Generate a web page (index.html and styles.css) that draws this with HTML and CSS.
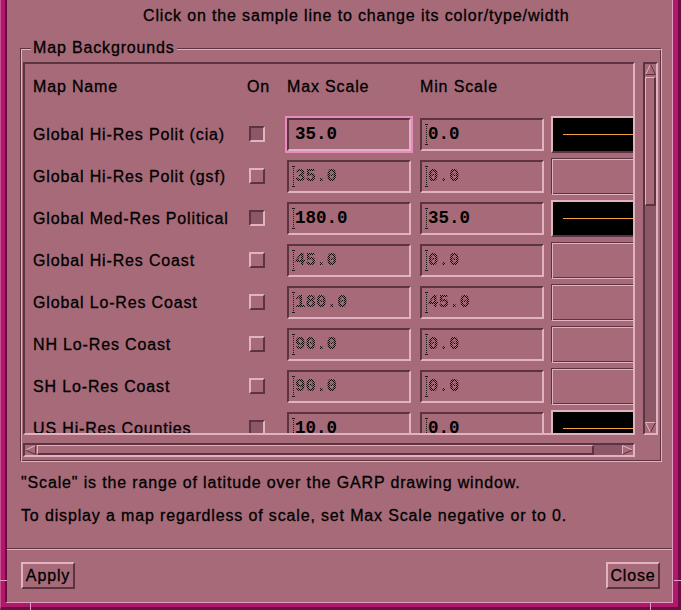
FILE: index.html
```html
<!DOCTYPE html>
<html>
<head>
<meta charset="utf-8">
<link rel="stylesheet" href="styles.css">
</head>
<body>
<div class="wm">
  <div class="wm-in">
    <div class="dialog">
      <div class="title">Click on the sample line to change its color/type/width</div>
      <div class="frame">
        <span class="frame-label">Map Backgrounds</span>
        <div class="sw">
          <div class="clip">
            <div class="table">
              <div class="hdr">
                <span class="c-name">Map Name</span>
                <span class="c-on">On</span>
                <span class="c-fld">Max Scale</span>
                <span class="c-fld">Min Scale</span>
              </div>

              <div class="row">
                <span class="name">Global Hi-Res Polit (cia)</span>
                <span class="on"><span class="tog set"></span></span>
                <span class="fld focus"><span class="val">35.0</span></span>
                <span class="fld"><span class="beam"></span><span class="val">0.0</span></span>
                <span class="line on-line"><span class="stroke"></span></span>
              </div>

              <div class="row">
                <span class="name">Global Hi-Res Polit (gsf)</span>
                <span class="on"><span class="tog"></span></span>
                <span class="fld"><span class="beam"></span><span class="val dim">35.0</span></span>
                <span class="fld"><span class="beam"></span><span class="val dim">0.0</span></span>
                <span class="line off-line"></span>
              </div>

              <div class="row">
                <span class="name">Global Med-Res Political</span>
                <span class="on"><span class="tog set"></span></span>
                <span class="fld"><span class="beam"></span><span class="val">180.0</span></span>
                <span class="fld"><span class="beam"></span><span class="val">35.0</span></span>
                <span class="line on-line"><span class="stroke"></span></span>
              </div>

              <div class="row">
                <span class="name">Global Hi-Res Coast</span>
                <span class="on"><span class="tog"></span></span>
                <span class="fld"><span class="beam"></span><span class="val dim">45.0</span></span>
                <span class="fld"><span class="beam"></span><span class="val dim">0.0</span></span>
                <span class="line off-line"></span>
              </div>

              <div class="row">
                <span class="name">Global Lo-Res Coast</span>
                <span class="on"><span class="tog"></span></span>
                <span class="fld"><span class="beam"></span><span class="val dim">180.0</span></span>
                <span class="fld"><span class="beam"></span><span class="val dim">45.0</span></span>
                <span class="line off-line"></span>
              </div>

              <div class="row">
                <span class="name">NH Lo-Res Coast</span>
                <span class="on"><span class="tog"></span></span>
                <span class="fld"><span class="beam"></span><span class="val dim">90.0</span></span>
                <span class="fld"><span class="beam"></span><span class="val dim">0.0</span></span>
                <span class="line off-line"></span>
              </div>

              <div class="row">
                <span class="name">SH Lo-Res Coast</span>
                <span class="on"><span class="tog"></span></span>
                <span class="fld"><span class="beam"></span><span class="val dim">90.0</span></span>
                <span class="fld"><span class="beam"></span><span class="val dim">0.0</span></span>
                <span class="line off-line"></span>
              </div>

              <div class="row">
                <span class="name">US Hi-Res Counties</span>
                <span class="on"><span class="tog set"></span></span>
                <span class="fld"><span class="beam"></span><span class="val">10.0</span></span>
                <span class="fld"><span class="beam"></span><span class="val">0.0</span></span>
                <span class="line on-line"><span class="stroke"></span></span>
              </div>
            </div>
          </div>
          <div class="gap"></div>
          <div class="vscroll">
            <svg class="arr" width="11" height="11" viewBox="0 0 11 11">
              <polygon points="5.5,1 1,10 10,10" fill="#a66a79"/>
              <path d="M0.5 10.5 L5.5 0.5" stroke="#e0b2c2" fill="none"/>
              <path d="M5.5 0.5 L10.5 10.5 L0.5 10.5" stroke="#5b3341" fill="none"/>
            </svg>
            <div class="vthumb"></div>
            <div class="vrest"></div>
            <svg class="arr" width="11" height="11" viewBox="0 0 11 11">
              <polygon points="1,1 10,1 5.5,10" fill="#a66a79"/>
              <path d="M5.5 10.5 L0.5 0.5 L10.5 0.5" stroke="#e0b2c2" fill="none"/>
              <path d="M10.5 0.5 L5.5 10.5" stroke="#5b3341" fill="none"/>
            </svg>
          </div>
          <div class="hscroll">
            <svg class="arr" width="11" height="10" viewBox="0 0 11 10">
              <polygon points="1,5 10,1 10,9" fill="#a66a79"/>
              <path d="M0.5 5 L10.5 0.5" stroke="#e0b2c2" fill="none"/>
              <path d="M10.5 0.5 L10.5 9.5 L0.5 5" stroke="#5b3341" fill="none"/>
            </svg>
            <div class="hthumb"></div>
            <div class="hrest"></div>
            <svg class="arr" width="11" height="10" viewBox="0 0 11 10">
              <polygon points="1,1 10,5 1,9" fill="#a66a79"/>
              <path d="M0.5 9.5 L0.5 0.5 L10.5 5" stroke="#e0b2c2" fill="none"/>
              <path d="M10.5 5 L0.5 9.5" stroke="#5b3341" fill="none"/>
            </svg>
          </div>
        </div>
      </div>
      <p class="note first">"Scale" is the range of latitude over the GARP drawing window.</p>
      <p class="note">To display a map regardless of scale, set Max Scale negative or to 0.</p>
      <div class="sep"></div>
      <div class="buttons">
        <button class="btn">Apply</button>
        <button class="btn">Close</button>
      </div>
    </div>
  </div>
  <span class="tick tick-bl"></span>
  <span class="tick tick-br"></span>
  <span class="tick-h tick-lh"></span>
  <span class="tick-h tick-rh"></span>
</div>
</body>
</html>
```
FILE: styles.css
```css
* { box-sizing: border-box; }
html, body { margin: 0; padding: 0; }
body {
  width: 681px;
  height: 610px;
  overflow: hidden;
  background: #a66a79;
  font-family: "Liberation Sans", Arial, sans-serif;
  font-size: 16px;
  letter-spacing: 0.85px;
  -webkit-text-stroke: 0.3px #000;
  color: #000;
}

.wm {
  position: relative;
  width: 681px;
  height: 610px;
  display: flex;
  background: #b0186e;
  border-left: 1px solid #c8508c;
  border-right: 3px solid #6c0c40;
  border-bottom: 3px solid #6c0c40;
  padding: 0 5px 4px 4px;
}
.wm-in {
  flex: 1;
  display: flex;
  border-left: 2px solid #6c0c40;
  border-right: 1px solid #e0a0c0;
  border-bottom: 1px solid #e0a0c0;
}
.dialog {
  flex: 1;
  background: #a66a79;
  display: flex;
  flex-direction: column;
}

.title {
  margin: 6px 0 0 136px;
  line-height: 20px;
  white-space: nowrap;
}

.frame {
  position: relative;
  margin: 22px 0 0 13px;
  width: 642px;
  height: 414px;
  border: 1px solid;
  border-color: #5b3341 #e0b2c2 #e0b2c2 #5b3341;
  box-shadow: inset 1px 1px 0 #e0b2c2, inset -1px -1px 0 #5b3341;
  padding: 13px 3px 4px 2px;
}
.frame-label {
  position: absolute;
  left: 10px;
  top: -11px;
  padding: 0 2px;
  line-height: 20px;
  background: #a66a79;
  white-space: nowrap;
}

.sw {
  display: grid;
  grid-template-columns: 612px 8px 15px;
  grid-template-rows: 373px 8px 14px;
}
.clip {
  grid-column: 1;
  grid-row: 1;
  overflow: hidden;
  border: 2px solid;
  border-color: #5b3341 #e0b2c2 #e0b2c2 #5b3341;
}
.gap { grid-column: 2; grid-row: 1; }
.vscroll {
  grid-column: 3;
  grid-row: 1;
  display: flex;
  flex-direction: column;
  border: 2px solid;
  border-color: #5b3341 #e0b2c2 #e0b2c2 #5b3341;
  background: #a66a79;
}
.hscroll {
  grid-column: 1;
  grid-row: 3;
  display: flex;
  border: 2px solid;
  border-color: #5b3341 #e0b2c2 #e0b2c2 #5b3341;
  background: #a66a79;
}
.arr { display: block; flex: none; }
.vthumb {
  margin-top: 2px;
  height: 129px;
  border-style: solid;
  border-width: 1px 2px 2px 1px;
  border-color: #e0b2c2 #5b3341 #5b3341 #e0b2c2;
}
.vrest { flex: 1; background: #8c5767; }
.hthumb {
  margin-left: 1px;
  width: 557px;
  border-style: solid;
  border-width: 1px 2px 2px 1px;
  border-color: #e0b2c2 #5b3341 #5b3341 #e0b2c2;
}
.hrest { flex: 1; background: #8c5767; }

.table { width: 660px; }
.hdr {
  display: flex;
  padding: 13px 0 0 8px;
  height: 49px;
  line-height: 20px;
  white-space: nowrap;
}
.c-name { width: 214px; }
.c-on { width: 38px; }
.c-fld { width: 133px; padding-left: 2px; }

.row {
  display: flex;
  align-items: flex-start;
  height: 42px;
  padding-left: 8px;
}
.name {
  width: 214px;
  margin-top: 12px;
  line-height: 20px;
  white-space: nowrap;
}
.on { width: 38px; padding: 13px 0 0 2px; }
.tog {
  display: block;
  width: 16px;
  height: 16px;
  border: 2px solid;
  border-color: #e0b2c2 #5b3341 #5b3341 #e0b2c2;
}
.tog.set {
  border-color: #5b3341 #e0b2c2 #e0b2c2 #5b3341;
  background: #8c5767;
}
.fld {
  position: relative;
  flex: none;
  width: 124px;
  height: 33px;
  margin: 5px 7px 0 2px;
  border: 2px solid;
  border-color: #5b3341 #e0b2c2 #e0b2c2 #5b3341;
  padding-left: 6px;
  font-family: "Liberation Mono", "Courier New", monospace;
  font-size: 17.5px;
  line-height: 29px;
  font-weight: bold;
  letter-spacing: 0;
  -webkit-text-stroke: 0;
}
.fld.focus { outline: 2px solid #e88cc0; }
.beam {
  position: absolute;
  left: 3px;
  top: 4px;
  width: 3px;
  height: 21px;
  background:
    linear-gradient(#1a1a1a, #1a1a1a) 0 0 / 1px 1px no-repeat,
    linear-gradient(#1a1a1a, #1a1a1a) 2px 0 / 1px 1px no-repeat,
    linear-gradient(#1a1a1a, #1a1a1a) 0 20px / 1px 1px no-repeat,
    linear-gradient(#1a1a1a, #1a1a1a) 2px 20px / 1px 1px no-repeat,
    repeating-linear-gradient(#1a1a1a 0 1px, transparent 1px 2px) 1px 0 / 1px 21px no-repeat;
}
.val.dim {
  font-weight: bold;
  background: repeating-conic-gradient(#000 0 25%, transparent 0 50%) 0 0 / 2px 2px;
  -webkit-background-clip: text;
  background-clip: text;
  color: transparent;
}
.line {
  flex: none;
  width: 130px;
  height: 37px;
  margin-top: 3px;
  position: relative;
}
.on-line {
  background: #000;
  border-style: solid;
  border-width: 2px 0 2px 2px;
  border-color: #e0b2c2 #5b3341 #5b3341 #e0b2c2;
}
.on-line .stroke {
  position: absolute;
  left: 10px;
  right: 0;
  top: 16px;
  height: 1px;
  background: #f0a040;
}
.off-line {
  border: 1px solid;
  border-color: #5b3341 #e0b2c2 #e0b2c2 #5b3341;
  box-shadow: inset 1px 1px 0 #e0b2c2, inset -1px -1px 0 #5b3341;
}

.note {
  margin: 13px 0 0 14px;
  line-height: 20px;
  white-space: nowrap;
}
.note.first { margin-top: 11px; }

.sep {
  margin-top: 22px;
  height: 2px;
  border-top: 1px solid #5b3341;
  border-bottom: 1px solid #e0b2c2;
}
.buttons {
  display: flex;
  justify-content: space-between;
  margin: 12px 12px 0 14px;
}
.btn {
  width: 54px;
  height: 27px;
  padding: 0;
  font: inherit;
  letter-spacing: inherit;
  color: #000;
  background: #a66a79;
  border: 2px solid;
  border-color: #e0b2c2 #5b3341 #5b3341 #e0b2c2;
  text-align: center;
  line-height: 22px;
}

.tick {
  position: absolute;
  bottom: -3px;
  width: 1px;
  height: 8px;
  background: #e0a0c0;
}
.tick-bl { left: 29px; }
.tick-br { right: 27px; }
.tick-h {
  position: absolute;
  top: 580px;
  height: 1px;
  width: 7px;
  background: #e0a0c0;
}
.tick-lh { left: -1px; }
.tick-rh { right: -3px; }
```
